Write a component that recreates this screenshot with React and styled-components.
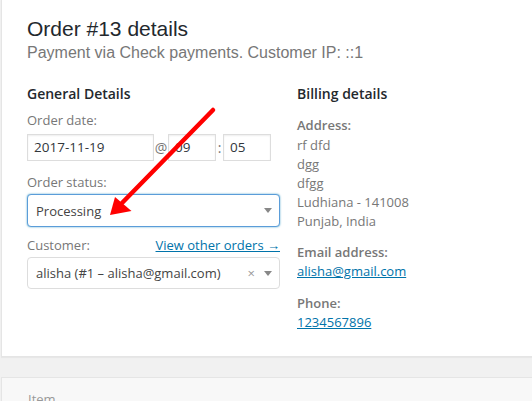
import React from "react";
import styled, { createGlobalStyle } from "styled-components";

const GlobalStyle = createGlobalStyle`
  html, body {
    margin: 0;
    padding: 0;
    background: #f1f1f1;
    overflow: hidden;
  }
  body {
    font-family: "Open Sans", "Liberation Sans", sans-serif;
    color: #444;
  }
`;

const Page = styled.div`
  position: relative;
  width: 532px;
  height: 401px;
  padding-left: 1px;
  box-sizing: border-box;
  overflow: hidden;
`;

const Panel = styled.div`
  width: 570px;
  box-sizing: border-box;
  background: #fff;
  border: 1px solid #e5e5e5;
  border-top: none;
  box-shadow: 0 1px 1px rgba(0, 0, 0, 0.04);
  padding: 14px 25px 24px 25px;
`;

const Title = styled.h2`
  margin: 0;
  font-family: "Liberation Sans", Arial, sans-serif;
  font-size: 21px;
  font-weight: 400;
  line-height: 29px;
  color: #23282d;
`;

const Meta = styled.p`
  margin: 0;
  font-family: "Liberation Sans", Arial, sans-serif;
  font-size: 16px;
  line-height: 20px;
  color: #777;
`;

const Columns = styled.div`
  display: grid;
  grid-template-columns: 253px 253px;
  column-gap: 17px;
  margin-top: 21px;
`;

const Column = styled.div`
  display: flex;
  flex-direction: column;
`;

const Heading = styled.h3`
  margin: 0;
  font-size: 14px;
  font-weight: 600;
  line-height: 20px;
  color: #23282d;
`;

const FieldLabel = styled.div`
  display: flex;
  justify-content: space-between;
  margin-top: ${(p) => p.$top}px;
  margin-bottom: ${(p) => p.$bottom}px;
  font-size: 13px;
  line-height: 19px;
  color: #777;
`;

const Link = styled.a`
  color: #0073aa;
  text-decoration: underline;
  cursor: pointer;
`;

const DateRow = styled.div`
  display: flex;
  align-items: center;
  font-size: 13px;
  color: #777;
`;

const Input = styled.div`
  box-sizing: border-box;
  width: ${(p) => p.$w}px;
  height: 27px;
  border: 1px solid #ddd;
  box-shadow: inset 0 1px 2px rgba(0, 0, 0, 0.07);
  padding: 0 6px;
  font-size: 13.5px;
  line-height: 25px;
  color: #32373c;
  background: #fff;
`;

const Sep = styled.span`
  width: ${(p) => p.$w}px;
  text-align: center;
  font-size: 14px;
  color: #777;
`;

const Select = styled.div`
  box-sizing: border-box;
  height: ${(p) => p.$h}px;
  display: flex;
  align-items: center;
  padding: 0 7px 0 8px;
  border: 1px solid ${(p) => (p.$focus ? "#5b9dd9" : "#ddd")};
  border-radius: 4px;
  box-shadow: ${(p) => (p.$focus ? "0 0 2px rgba(30,140,190,.8)" : "none")};
  background: #fff;
  font-size: 13px;
  color: #444;
`;

const SelectText = styled.span`
  flex: 1;
  white-space: nowrap;
`;

const Clear = styled.span`
  font-size: 13px;
  color: #999;
  margin-right: 9px;
  line-height: 1;
`;

const Caret = styled.span`
  width: 0;
  height: 0;
  border-left: 4px solid transparent;
  border-right: 4px solid transparent;
  border-top: 5px solid #888;
`;

const InfoBlock = styled.div`
  margin-top: ${(p) => p.$top}px;
  font-size: 13px;
  line-height: 19px;
  color: #777;
`;

const InfoLabel = styled.strong`
  display: block;
  font-weight: 600;
  margin-bottom: ${(p) => p.$gap || 0}px;
`;

const Line = styled.div``;

const Lower = styled.div`
  margin-top: 20px;
  width: 570px;
  height: 60px;
  box-sizing: border-box;
  background: #f8f8f8;
  border: 1px solid #e5e5e5;
  padding: 12px 26px;
  font-size: 13px;
  line-height: 19px;
  color: #999;
`;

const Overlay = styled.svg`
  position: absolute;
  left: 0;
  top: 0;
  pointer-events: none;
`;

const App = () => {
  return (
    <>
      <GlobalStyle />
      <Page>
        <Panel>
          <Title>Order #13 details</Title>
          <Meta>Payment via Check payments. Customer IP: ::1</Meta>
          <Columns>
            <Column>
              <Heading>General Details</Heading>
              <FieldLabel $top={7} $bottom={4}>Order date:</FieldLabel>
              <DateRow>
                <Input $w={127}>2017-11-19</Input>
                <Sep $w={14}>@</Sep>
                <Input $w={48}>09</Input>
                <Sep $w={7}>:</Sep>
                <Input $w={48}>05</Input>
              </DateRow>
              <FieldLabel $top={12} $bottom={2}>Order status:</FieldLabel>
              <Select $h={33} $focus>
                <SelectText>Processing</SelectText>
                <Caret />
              </Select>
              <FieldLabel $top={9} $bottom={2}>
                <span>Customer:</span>
                <Link>View other orders →</Link>
              </FieldLabel>
              <Select $h={32}>
                <SelectText>alisha (#1 – alisha@gmail.com)</SelectText>
                <Clear>×</Clear>
                <Caret />
              </Select>
            </Column>
            <Column>
              <Heading>Billing details</Heading>
              <InfoBlock $top={12}>
                <InfoLabel $gap={1}>Address:</InfoLabel>
                <Line>rf dfd</Line>
                <Line>dgg</Line>
                <Line>dfgg</Line>
                <Line>Ludhiana - 141008</Line>
                <Line>Punjab, India</Line>
              </InfoBlock>
              <InfoBlock $top={12}>
                <InfoLabel>Email address:</InfoLabel>
                <Link>alisha@gmail.com</Link>
              </InfoBlock>
              <InfoBlock $top={13}>
                <InfoLabel>Phone:</InfoLabel>
                <Link>1234567896</Link>
              </InfoBlock>
            </Column>
          </Columns>
        </Panel>
        <Lower>Item</Lower>
        <Overlay width="532" height="401" viewBox="0 0 532 401">
          <line x1="213" y1="110" x2="122" y2="203" stroke="#f00" strokeWidth="4.5" strokeLinecap="round" />
          <polygon points="110,215 115,197 131.5,211" fill="#f00" />
        </Overlay>
      </Page>
    </>
  );
};

export default App;
